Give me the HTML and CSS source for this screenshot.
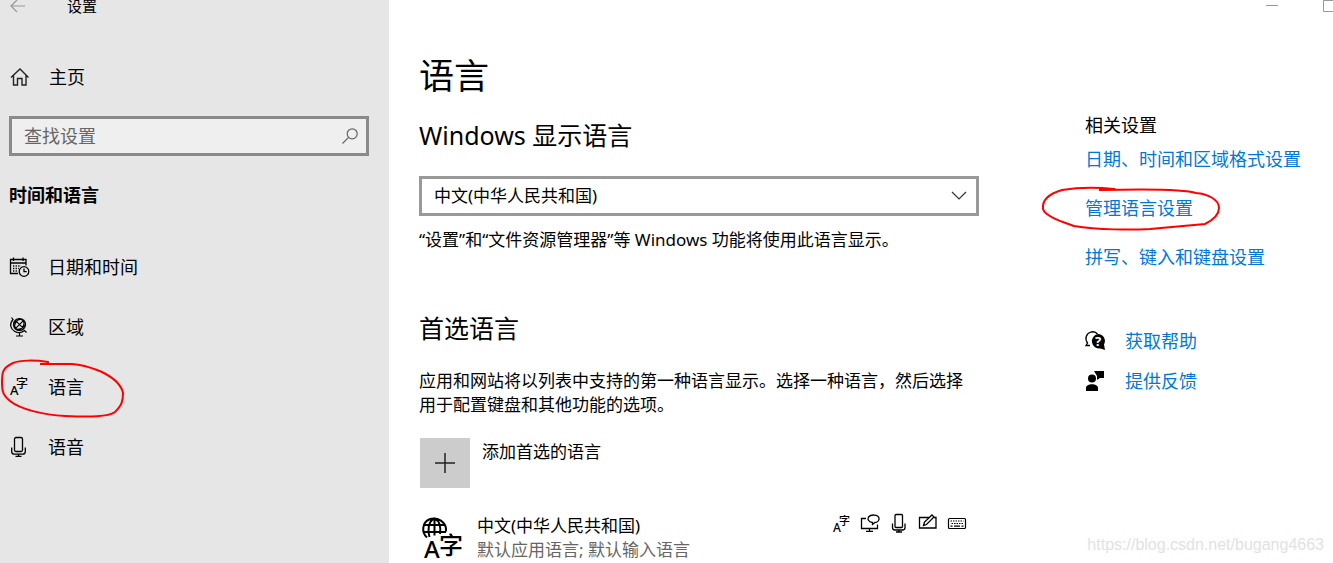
FILE: index.html
```html
<!DOCTYPE html>
<html lang="zh-CN">
<head>
<meta charset="utf-8">
<title>设置</title>
<link rel="stylesheet" href="styles.css">
</head>
<body>
<div class="window">
  <nav class="sidebar">
    <header class="titlebar">
      <button class="back" aria-label="返回"><svg width="16" height="14" viewBox="0 0 16 14"><path d="M15 7H1M7 1L1 7l6 6" fill="none" stroke="#999" stroke-width="1.2"/></svg></button>
      <span class="app-name">设置</span>
    </header>
    <a class="nav-item home" href="#">
      <svg class="nav-icon" viewBox="0 0 20 20"><path d="M2 10.500L11 2l8.500 8.500M4.500 8.500V18h4v-6.500h4.500V18h4V8.500" fill="none" stroke="#222" stroke-width="1.400"/></svg>
      <span>主页</span>
    </a>
    <label class="search">
      <input type="search" placeholder="查找设置" aria-label="查找设置">
      <svg class="search-icon" viewBox="0 0 16 16"><circle cx="10.200" cy="5.800" r="5" fill="none" stroke="#666" stroke-width="1.200"/><path d="M6.600 9.400L.5 15.500" stroke="#666" stroke-width="1.200"/></svg>
    </label>
    <h2 class="group">时间和语言</h2>
    <ul class="nav-list">
      <li><a class="nav-item" href="#">
        <svg class="nav-icon" viewBox="0 0 20 20" fill="none" stroke="#000" stroke-width="1.300"><path d="M9 16.500H1.500V2.500h15.500v6M1.500 6h15.500M4.500 .5v3.500M14 .5v3.500"/><path d="M4 9h8M4 11.500h6M4 14h5" stroke-dasharray="1.300 1.300"/><circle cx="15" cy="14.500" r="4.800"/><path d="M15 11.500v3.200h2.700"/></svg>
        <span>日期和时间</span></a></li>
      <li><a class="nav-item" href="#">
        <svg class="nav-icon" viewBox="0 0 20 20" fill="none" stroke="#000" stroke-width="1.200"><circle cx="10.500" cy="7.500" r="6"/><path d="M2.500 .5l1.500 2C0 7 1.500 12 5.500 14.200C9 16.300 13 15.500 15.500 13.500l2 2M10.500 15.500v3.500M7 19h7M6.300 3.300l8.400 8.400M6.300 11.700l8.400-8.400M5 6.500C7.500 2.500 12 1.500 14 3.500C16.500 6 14.500 11 10 13.200M10.500 1.500C6 4.500 4.500 9.500 6.500 11.500C9 13.500 14 11.500 16.400 8"/></svg>
        <span>区域</span></a></li>
      <li><a class="nav-item marked" href="#">
        <svg class="nav-icon" viewBox="0 0 20 20"><text class="glyph" x="1" y="18" font-size="13">A</text><text class="glyph" x="7" y="11" font-size="12">字</text></svg>
        <span>语言</span>
        <svg class="ring ring-nav" viewBox="0 0 126 62" fill="none" stroke="#f00" stroke-width="2"><path d="M48 5V3C35 1 20 1 13 4C2 9 2 14 2 24C2 34 4 37 10 42C20 50 43 56 65 57C90 58 108 58 115 53C122 46 123 42 123 34C121 24 110 17 102 13C94 10 87 6 72 5L40 5" /></svg>
      </a></li>
      <li><a class="nav-item" href="#">
        <svg class="nav-icon" viewBox="0 0 20 20" fill="none" stroke="#000" stroke-width="1.300"><rect x="5.500" y="0.500" width="8" height="14" rx="1.500"/><path d="M2.700 10.500v4q0 2.700 2.700 2.700h8.200q2.700 0 2.700-2.700v-4M9.500 17.200v2.300M6.500 19.300h6"/></svg>
        <span>语音</span></a></li>
    </ul>
  </nav>

  <main class="content">
    <h1>语言</h1>
    <section class="display">
      <h2><label for="lang">Windows 显示语言</label></h2>
      <div class="select-box">
        <select id="lang"><option>中文(中华人民共和国)</option></select>
        <svg class="chevron" viewBox="0 0 16 10"><path d="M1 1l7 7 7-7" fill="none" stroke="#333" stroke-width="1.200"/></svg>
      </div>
      <p>“设置”和“文件资源管理器”等 Windows 功能将使用此语言显示。</p>
    </section>
    <section class="preferred">
      <h2>首选语言</h2>
      <p>应用和网站将以列表中支持的第一种语言显示。选择一种语言，然后选择<br>用于配置键盘和其他功能的选项。</p>
      <button class="add">
        <span class="tile"><svg width="20" height="20" viewBox="0 0 20 20"><path d="M0 10h20M10 0v20" stroke="#222" stroke-width="1.500"/></svg></span>
        <span>添加首选的语言</span>
      </button>
      <div class="language">
        <svg class="language-icon" viewBox="0 0 42 44"><g fill="none" stroke="#000" stroke-width="2"><path d="M5 20.500C-1 15 .5 5.500 7 2.500C15-1 25 5 24 14.500M1.500 8h21.500M1.500 15h22.500M12.500 1.500v17M7.500 20C5.500 14 6 4 12.500 1.500C18 4 19 10 18 17"/></g><text class="glyph" x="2" y="41" font-size="24">A</text><text class="glyph" x="17" y="37" font-size="24">字</text></svg>
        <div class="language-text">
          <span>中文(中华人民共和国)</span>
          <span class="muted">默认应用语言; 默认输入语言</span>
        </div>
        <div class="features">
          <svg viewBox="0 0 20 20"><text class="glyph" x="2" y="18" font-size="12">A</text><text class="glyph" x="8" y="11" font-size="11">字</text></svg>
          <svg viewBox="0 0 20 20" fill="none" stroke="#000" stroke-width="1.300"><path d="M6 4.500H1.500v10H17.500v-4M9.500 15v2.500M6 17.300h7M12.500 8.500C8 8 7.500 5 8.500 3C11 0 18 .5 19 4C19.500 7 17 8.500 15 8.500l-2.500 2z"/></svg>
          <svg viewBox="0 0 20 20" fill="none" stroke="#000" stroke-width="1.300"><rect x="6" y="0.500" width="7.500" height="13" rx="1"/><path d="M3.500 9.500v4q0 2.500 2.500 2.500h7.500q2.500 0 2.500-2.500v-4M9.800 16v2.500M7 18h6"/></svg>
          <svg viewBox="0 0 20 20" fill="none" stroke="#000" stroke-width="1.300"><path d="M11 3.500H1.500v10.500h16.500V3.500H16M5.500 11.500l1-3.500L14 1l2 2L8.500 10.500z"/></svg>
          <svg viewBox="0 0 20 20" fill="none" stroke="#000" stroke-width="1.200"><rect x="1.500" y="4.500" width="17" height="10" rx="1"/><path d="M3.500 7h13M4.500 9.500h12" stroke-dasharray="1.500 1"/><path d="M3.500 12.200h2M7 12.200h6M14.500 12.200h2"/></svg>
        </div>
      </div>
    </section>
  </main>

  <aside class="related">
    <div class="controls">
      <button aria-label="最小化"><svg width="12" height="12" viewBox="0 0 12 12"><path d="M0 5.500h12" stroke="#999"/></svg></button>
      <button class="maximize" aria-label="最大化"><svg width="10" height="12" viewBox="0 0 10 12"><path d="M10 .5H.5v11H10" fill="none" stroke="#999"/></svg></button>
    </div>
    <h2>相关设置</h2>
    <a href="#">日期、时间和区域格式设置</a>
    <a class="marked" href="#">管理语言设置
      <svg class="ring ring-link" viewBox="0 0 182 46" fill="none" stroke="#f00" stroke-width="2"><path d="M74 5V4C55 2 40 2 22 5C8 9 2 15 3 24C5 31 20 36 34 41C58 45 93 45 110 44L165 39C173 35 179 30 179 23C179 14 167 9 156 8C145 4 100 4 59 5"/></svg>
    </a>
    <a href="#">拼写、键入和键盘设置</a>
    <div class="support">
      <a href="#"><svg viewBox="0 0 20 20"><path d="M5 14.500H1L2.500 12C-.5 8 1 2.500 6 1C9 .3 11 1 12.500 3" fill="none" stroke="#000" stroke-width="1.300"/><path d="M13 3a7 7 0 0 1 6 10.500l1 5.500-4.500-1.500A7.300 7.300 0 1 1 13 3z"/><text class="question" x="10" y="15" font-size="13">?</text></svg><span>获取帮助</span></a>
      <a href="#"><svg viewBox="0 0 20 20"><circle cx="7" cy="7.500" r="4"/><path d="M1 20v-3c0-5 12-5 12 0v3zM9 0h10v7h-4l-3 2V5z"/></svg><span>提供反馈</span></a>
    </div>
  </aside>
  <div class="watermark">https://blog.csdn.net/bugang4663</div>
</div>
</body>
</html>
```
FILE: styles.css
```css
* { box-sizing: border-box; }

body {
  margin: 0;
  background: #fff;
  color: #000;
  font: 17px/24px "Noto Sans", "Noto Sans CJK SC", sans-serif;
}

h1, h2, p, ul { margin: 0; padding: 0; }
ul { list-style: none; }
a { color: inherit; text-decoration: none; }
button { border: 0; padding: 0; background: none; color: inherit; font: inherit; text-align: left; }
svg { display: block; flex: none; overflow: visible; }

.window {
  position: relative;
  display: grid;
  grid-template-columns: 389px minmax(0, 1fr) 248px;
  height: 100vh;
  overflow: hidden;
}

.sidebar { background: #e6e6e6; padding: 0 20px 0 9px; font-size: 18px; }

.titlebar {
  display: flex;
  align-items: center;
  gap: 41px;
  height: 12px;
  padding-left: 1px;
  font-size: 15px;
  line-height: 12px;
}

.nav-item { position: relative; display: flex; align-items: center; gap: 19px; height: 60px; }
.nav-icon { width: 20px; height: 20px; }
.home { height: 40px; margin-top: 45px; gap: 20px; }

.search { position: relative; display: block; margin-top: 19px; }
.search input {
  display: block;
  width: 100%;
  height: 40px;
  padding: 0 40px 0 12px;
  border: 3px solid #8a8a8a;
  border-radius: 0;
  background: #efefef;
  font: inherit;
  appearance: none;
}
.search input::placeholder { color: #666; opacity: 1; }
.search-icon { position: absolute; right: 11px; top: 12px; width: 16px; height: 16px; }

.group { margin: 25px 0 28px; font-size: 18px; line-height: 28px; }

.glyph { font-family: "Noto Sans", "Noto Sans CJK SC", sans-serif; font-weight: 500; }

.content { padding: 52px 106px 0 30px; }
h1 { font-size: 35px; line-height: 48px; font-weight: 400; }
.content h2 { font-size: 25px; line-height: 36px; font-weight: 400; }
.display { margin-top: 17px; }
.select-box { position: relative; margin: 23px 0 12px; }
.select-box select {
  display: block;
  width: 100%;
  height: 40px;
  padding: 0 40px 0 12px;
  border: 3px solid #999;
  border-radius: 0;
  background: #fff;
  color: #000;
  font: inherit;
  appearance: none;
}
.chevron { position: absolute; right: 12px; top: 15px; width: 16px; height: 10px; pointer-events: none; }
.preferred { margin-top: 58px; }
.preferred p { margin-top: 23px; white-space: nowrap; }

.add { display: flex; gap: 12px; margin: 21px 0 26px 1px; }
.add > span:last-child { padding-top: 2px; }
.tile { display: grid; place-items: center; width: 50px; height: 50px; background: #ccc; }

.language { display: flex; padding: 0 12px 0 3px; }
.language-icon { width: 42px; height: 44px; margin: 3px 13px 0 0; }
.language-text { display: flex; flex-direction: column; flex: 1; }
.muted { color: #666; }
.features { display: flex; gap: 9px; }
.features svg { width: 20px; height: 20px; }

.related { display: flex; flex-direction: column; align-items: flex-start; font-size: 18px; }
.controls { display: flex; align-self: flex-end; gap: 45px; height: 12px; }
.related h2 { margin: 101px 0 10px; font-size: 18px; line-height: 24px; font-weight: 400; }
.related a { position: relative; color: #0078d7; white-space: nowrap; margin-bottom: 25px; }
.support { display: grid; gap: 16px; margin-top: 35px; }
.related .support a { display: flex; align-items: center; gap: 20px; margin: 0; }
.support svg { width: 20px; height: 20px; fill: #000; }
.question { fill: #fff; font-family: "Noto Sans", sans-serif; font-weight: 700; }

.ring { position: absolute; pointer-events: none; }
.ring-nav { left: -9px; top: 2px; width: 126px; height: 62px; }
.ring-link { left: -45px; top: -11px; width: 182px; height: 46px; }

.watermark {
  position: absolute;
  right: 9px;
  bottom: 6px;
  color: #e2e2e2;
  font: 16px/24px "Liberation Sans", sans-serif;
}
```
